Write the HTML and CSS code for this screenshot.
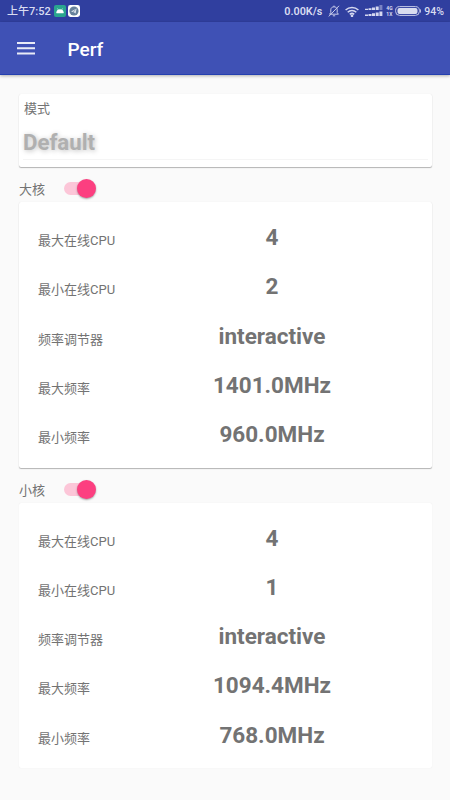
FILE: index.html
```html
<!DOCTYPE html>
<html lang="zh-CN">

<head>
    <meta charset="UTF-8">
    <meta name="viewport" content="width=device-width, initial-scale=1.0">
    <title>Perf</title>
    <link rel="stylesheet" href="styles.css">
</head>

<body>
    <div id="statusBar">
        <span class="clock">上午7:52</span>
        <svg class="notice" width="12" height="12" viewBox="0 0 12 12">
            <rect width="12" height="12" rx="2" fill="#2aa58f" />
            <path d="M2.5 8a3.5 3.4 0 0 1 7 0zM3.4 3.4l1 1.6M8.6 3.4L7.6 5" fill="#fff" stroke="#fff" stroke-width=".5" />
        </svg>
        <svg class="notice" width="12" height="12" viewBox="0 0 12 12">
            <rect width="12" height="12" rx="2.4" fill="#fff" />
            <circle cx="6" cy="6" r="4.6" fill="#66819b" />
            <path d="M3 6.4L8.6 3.6 7.6 8.4 5.8 7.2z" fill="#dce4ec" />
            <path d="M5 7.2L7.5 4.8" stroke="#66819b" stroke-width=".7" />
        </svg>
        <span class="speed">0.00K/s</span>
        <svg class="bell" width="12" height="12" viewBox="0 0 12 12" fill="none" stroke="#c9cdeb">
            <path d="M1.6 9.2h8.8L9.2 7.7V4.8C9.2 2.9 7.8 1.8 6 1.8S2.8 2.9 2.8 4.8v2.9zM6 .6v1.2M4.8 10.8h2.4M.8 11.4L11 .8" />
        </svg>
        <svg class="wifi" width="14" height="11" viewBox="0 0 14 11" fill="none" stroke="#d5d8f0" stroke-width="1.5">
            <path d="M.6 4a9.2 9.2 0 0 1 12.8 0M2.7 6.3a6.2 6.2 0 0 1 8.6 0M4.8 8.4a3.2 3.2 0 0 1 4.4 0" />
            <circle cx="7" cy="9.8" r=".6" />
        </svg>
        <svg class="signal" width="18" height="12" viewBox="0 0 18 12" fill="#d5d8f0">
            <path d="M0 3.8h3v1.2H0zM3.5 3.2h3V5h-3zM7 2.4h3V5H7zM10.7 1.4h3V5h-3z" />
            <path d="M14.4 0h3v5h-3z" opacity=".45" />
            <path d="M0 9.6h3v1.4H0zM3.5 9h3v2h-3zM7 8.2h3V11H7zM10.7 7.4h3V11h-3zM14.4 6.4h3V11h-3z" />
        </svg>
        <span class="network"><b>4G</b><b>1X</b></span>
        <svg class="battery" width="26" height="10" viewBox="0 0 26 10">
            <rect x=".6" y=".6" width="23.8" height="8.8" rx="4" fill="none" stroke="#c5c9e8" stroke-width="1" />
            <rect x="2.5" y="2" width="20" height="6" rx="2" fill="#d9dcef" />
            <path d="M25.4 3.4v3.2" stroke="#c5c9e8" />
        </svg>
        <span class="percent">94%</span>
    </div>

    <header id="toolbar">
        <svg width="18" height="13" viewBox="0 0 18 13" fill="#e9ebf7">
            <path d="M0 0h18v2H0zM0 5.3h18v2H0zM0 10.6h18v2H0z" />
        </svg>
        <h1>Perf</h1>
    </header>

    <main>
        <section class="card mode">
            <p class="modeLabel">模式</p>
            <p class="modeValue">Default</p>
        </section>

        <div class="cluster">
            <span>大核</span>
            <span class="switch"></span>
        </div>
        <section class="card settings">
            <div class="row"><span>最大在线CPU</span><b>4</b></div>
            <div class="row"><span>最小在线CPU</span><b>2</b></div>
            <div class="row"><span>频率调节器</span><b>interactive</b></div>
            <div class="row"><span>最大频率</span><b>1401.0MHz</b></div>
            <div class="row"><span>最小频率</span><b>960.0MHz</b></div>
        </section>

        <div class="cluster">
            <span>小核</span>
            <span class="switch"></span>
        </div>
        <section class="card settings flat">
            <div class="row"><span>最大在线CPU</span><b>4</b></div>
            <div class="row"><span>最小在线CPU</span><b>1</b></div>
            <div class="row"><span>频率调节器</span><b>interactive</b></div>
            <div class="row"><span>最大频率</span><b>1094.4MHz</b></div>
            <div class="row"><span>最小频率</span><b>768.0MHz</b></div>
        </section>
    </main>
</body>

</html>
```

FILE: styles.css
```css
* {
    box-sizing: border-box;
}

body {
    margin: 0;
    height: 800px;
    overflow: hidden;
    font-family: Roboto, "Noto Sans CJK SC", sans-serif;
    font-size: 13px;
    color: #737373;
    background-color: #fafafa;
}

p,
h1 {
    margin: 0;
}

#statusBar {
    display: flex;
    align-items: center;
    height: 22px;
    padding: 0 6px 0 7px;
    font-size: 11px;
    font-weight: 500;
    line-height: 22px;
    white-space: nowrap;
    color: #d9dcf1;
    background-color: #303f9f;
}

#statusBar svg {
    flex: none;
}

.clock,
.speed,
.percent {
    padding-top: 1px;
}

.clock {
    width: 47px;
}

.notice {
    margin-right: 2px;
}

.speed {
    margin-left: auto;
    font-size: 10.8px;
    font-weight: 600;
}

.bell {
    margin-left: 6px;
}

.wifi {
    margin-left: 5px;
}

.signal {
    margin-left: 6px;
}

.network {
    display: flex;
    flex-direction: column;
    width: 6px;
    margin: 0 3px;
    font-size: 5px;
    line-height: 6px;
}

.percent {
    margin-left: 3px;
    font-size: 10.5px;
}

#toolbar {
    display: flex;
    align-items: center;
    height: 53px;
    padding: 1px 0 0 17px;
    color: #fff;
    background-color: #3f51b5;
    border-bottom: 1px solid #2440b0;
    box-shadow: 0 1px 3px rgba(0, 0, 0, 0.3);
}

#toolbar h1 {
    margin-left: 32.5px;
    padding-top: 1px;
    font-size: 19px;
    font-weight: 500;
}

main {
    padding: 19px 18.5px 0 19px;
}

.card {
    background-color: #fff;
    border-radius: 2px;
    box-shadow: 0 1px 1px rgba(0, 0, 0, 0.28), 0 0 1px rgba(0, 0, 0, 0.1);
}

.mode {
    height: 73px;
    padding: 5px 4px 0;
}

.modeLabel {
    padding-left: 1px;
    line-height: 19px;
}

.modeValue {
    height: 42px;
    font-size: 22.2px;
    font-weight: 700;
    line-height: 49px;
    color: #b0b0b0;
    text-shadow: 1px 1px 5px rgba(0, 0, 0, 0.25);
    border-bottom: 1px solid #f5f5f5;
}

.cluster {
    display: flex;
    align-items: center;
    height: 35px;
    padding-top: 8px;
}

.switch {
    position: relative;
    width: 29px;
    height: 13px;
    margin-left: 19px;
    border-radius: 7px;
    background-color: #fcc6d8;
}

.switch::after {
    content: "";
    position: absolute;
    top: -3px;
    right: -3px;
    width: 19px;
    height: 19px;
    border-radius: 50%;
    background-color: #fc3f80;
    box-shadow: 0 1px 2px rgba(0, 0, 0, 0.35);
}

.settings {
    height: 265.5px;
    padding: 11px 19px 0;
}

.row {
    display: flex;
    height: 49.3px;
    line-height: 49px;
}

.row span {
    flex: none;
    width: 140px;
    padding-top: 3px;
}

.row b {
    width: 188px;
    font-size: 22.5px;
    text-align: center;
}

.flat {
    box-shadow: 0 0 1px rgba(0, 0, 0, 0.1);
}
```
